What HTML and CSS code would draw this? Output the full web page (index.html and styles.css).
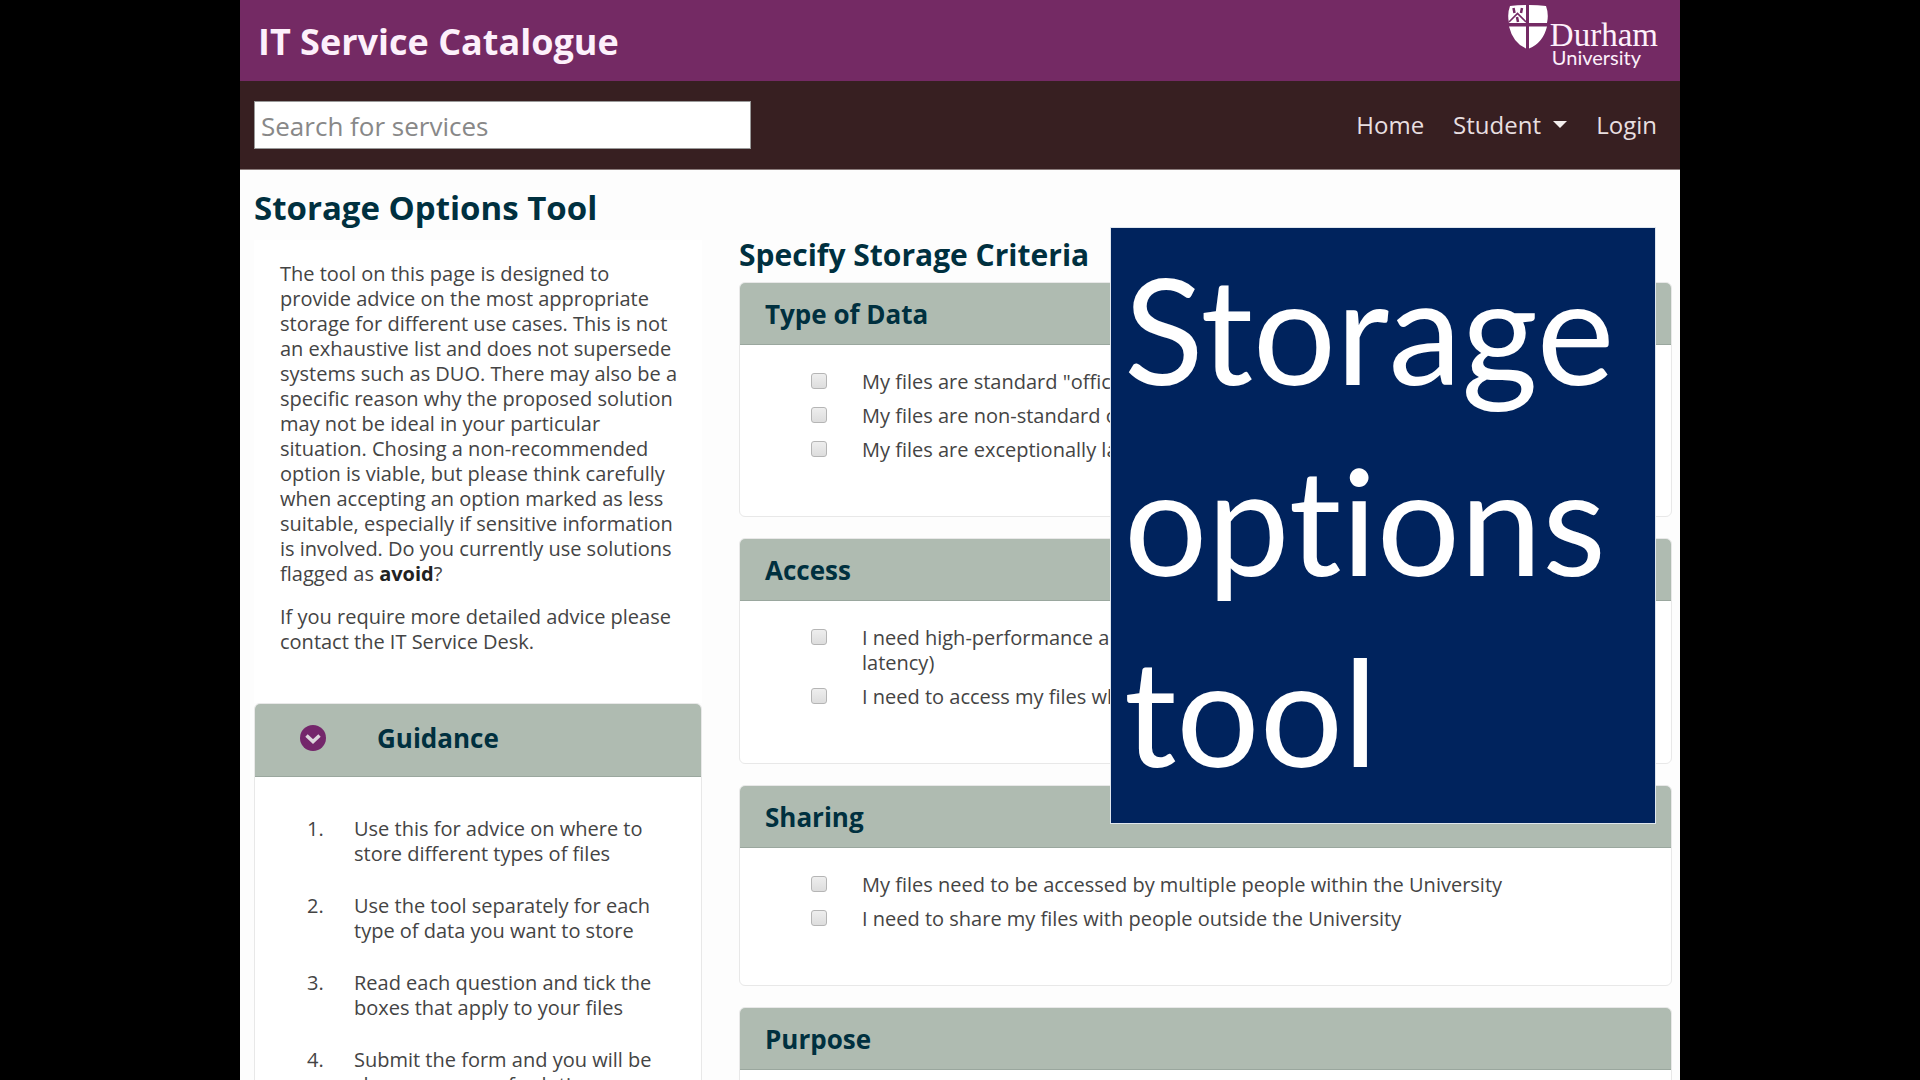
FILE: index.html
```html
<!DOCTYPE html>
<html lang="en">
<head>
<meta charset="utf-8">
<title>Storage Options Tool - IT Service Catalogue</title>
<link rel="stylesheet" href="styles.css">
</head>
<body>
<div class="stage">
  <header class="banner">
    <h1 class="site-title">IT Service Catalogue</h1>
    <a class="logo" href="#">
      <svg class="shield" viewBox="0 0 40 44" aria-hidden="true">
        <path fill="#fff" d="M2 1Q9 0 18 0V18H1Q-1 9 2 1ZM21 0Q30 0 38 1Q41 9 39 18H21ZM1 21.500H18V43.500Q5 38 1 21.500ZM21 21.500H39Q35 38 21 43.500Z"/>
        <path fill="none" stroke="#742a64" stroke-width="1.600" d="M1 17L9.500 8.500L18 17"/>
        <path fill="none" stroke="#742a64" stroke-width="2.500" d="M5.500 3L6.500 8M14 3L13 8M9 12L10 17"/>
      </svg>
      <span class="logo-text"><span class="logo-name">Durham</span><span class="logo-kind">University</span></span>
    </a>
  </header>
  <nav class="navbar">
    <input class="search" type="search" placeholder="Search for services" aria-label="Search for services">
    <div class="nav-links">
      <a href="#">Home</a>
      <a href="#">Student <span class="caret"></span></a>
      <a href="#">Login</a>
    </div>
  </nav>
  <main class="content">
    <h2 class="page-title">Storage Options Tool</h2>
    <div class="columns">
      <aside class="side">
        <section class="intro">
          <p>The tool on this page is designed to provide advice on the most appropriate storage for different use cases. This is not an exhaustive list and does not supersede systems such as DUO. There may also be a specific reason why the proposed solution may not be ideal in your particular situation. Chosing a non-recommended option is viable, but please think carefully when accepting an option marked as less suitable, especially if sensitive information is involved. Do you currently use solutions flagged as <strong>avoid</strong>?</p>
          <p>If you require more detailed advice please contact the IT Service Desk.</p>
        </section>
        <section class="card">
          <button class="card-head toggle" type="button" aria-expanded="true">
            <svg class="chevron" viewBox="0 0 26 26" aria-hidden="true"><circle cx="13" cy="13" r="13" fill="#74266b"/><path d="M6.500 10.500L13 16.500L19.500 10.500" fill="none" stroke="#dcd5dc" stroke-width="3.500"/></svg>
            Guidance
          </button>
          <ol class="steps">
            <li>Use this for advice on where to store different types of files</li>
            <li>Use the tool separately for each type of data you want to store</li>
            <li>Read each question and tick the boxes that apply to your files</li>
            <li>Submit the form and you will be shown a range of solutions</li>
          </ol>
        </section>
      </aside>
      <form class="criteria">
        <h2 class="criteria-title">Specify Storage Criteria</h2>
        <section class="card">
          <h3 class="card-head">Type of Data</h3>
          <div class="options">
            <label><input type="checkbox"><span>My files are standard "office" documents</span></label>
            <label><input type="checkbox"><span>My files are non-standard or specialist</span></label>
            <label><input type="checkbox"><span>My files are exceptionally large</span></label>
          </div>
        </section>
        <section class="card">
          <h3 class="card-head">Access</h3>
          <div class="options">
            <label><input type="checkbox"><span>I need high-performance access to my files (for example high bandwidth or low latency)</span></label>
            <label><input type="checkbox"><span>I need to access my files when off campus</span></label>
          </div>
        </section>
        <section class="card">
          <h3 class="card-head">Sharing</h3>
          <div class="options">
            <label><input type="checkbox"><span>My files need to be accessed by multiple people within the University</span></label>
            <label><input type="checkbox"><span>I need to share my files with people outside the University</span></label>
          </div>
        </section>
        <section class="card">
          <h3 class="card-head">Purpose</h3>
          <div class="options"></div>
        </section>
      </form>
    </div>
  </main>
  <div class="callout">Storage options tool</div>
</div>
</body>
</html>
```
FILE: styles.css
```css
* { box-sizing: border-box; }
body {
  margin: 0;
  background: #000;
  color: #444;
  font: 20px/25px "Open Sans", "Noto Sans", sans-serif;
}
h1, h2, h3, p { margin: 0; }
a { color: inherit; text-decoration: none; }

.stage {
  position: relative;
  width: 75%;
  height: 100vh;
  margin: 0 auto;
  overflow: hidden;
  background: #fdfdfd;
}

.banner {
  display: flex;
  justify-content: space-between;
  align-items: flex-start;
  height: 81px;
  padding: 5px 22px 0 18px;
  background: #742a64;
  color: #fdf0fb;
}
.site-title { padding-top: 12px; font-size: 36px; line-height: 50px; }
.logo { display: flex; gap: 2px; }
.shield { width: 40px; height: 44px; }
.logo-text { display: flex; flex-direction: column; padding-top: 18px; }
.logo-name { font: 33px/24px "Liberation Serif", serif; }
.logo-kind { padding-left: 2px; font: 20px/20px Lato, sans-serif; }

.navbar {
  display: flex;
  justify-content: space-between;
  align-items: center;
  height: 89px;
  padding: 0 23px 0 14px;
  border-bottom: 1px solid #8a7b7b;
  background: #371f21;
  color: #e8dfe0;
}
.search {
  width: 497px;
  height: 48px;
  padding: 1px 6px 0;
  border: 1px solid #999;
  font: 26px "Open Sans", "Noto Sans", sans-serif;
}
.search::placeholder { color: #888; }
.nav-links { display: flex; gap: 29px; font-size: 24px; line-height: 32px; }
.caret {
  display: inline-block;
  margin: 0 0 6px 6px;
  border: 7px solid transparent;
  border-top-color: #f4eeee;
  border-bottom: 0;
}

.content { padding: 17px 8px 0 14px; }
.page-title, .criteria-title { color: #00303f; font-size: 33px; line-height: 42px; }
.columns { display: grid; grid-template-columns: 448px 1fr; gap: 37px; }

.intro { min-height: 463px; margin-top: 11px; padding: 21px 22px 0 26px; background: #fff; }
.intro p + p { margin-top: 18px; }
.intro strong { color: #222; }

.card {
  margin-bottom: 21px;
  border: 1px solid #e8e8e8;
  border-radius: 6px;
  background: #fff;
}
.card-head {
  width: 100%;
  padding: 15px 25px 14px;
  border: 0;
  border-bottom: 1px solid #9aa79e;
  border-radius: 5px 5px 0 0;
  background: #afbbb1;
  color: #00303f;
  font: bold 26px/32px "Open Sans", "Noto Sans", sans-serif;
  text-align: left;
}
.toggle { display: flex; align-items: center; gap: 51px; padding: 18px 45px 22px; }
.chevron { width: 26px; height: 26px; }

.steps {
  display: grid;
  gap: 27px;
  margin: 0;
  padding: 39px 40px 0 52px;
  list-style: none;
  counter-reset: step;
}
.steps li { display: flex; counter-increment: step; }
.steps li::before { content: counter(step) "."; flex: 0 0 47px; }

.criteria-title { margin: 5px 0 6px; font-size: 30px; }
.options { display: grid; gap: 9px; padding: 24px 25px 54px 71px; }
.options label { display: flex; align-items: flex-start; gap: 35px; }
.options input {
  appearance: none;
  flex: none;
  width: 16px;
  height: 16px;
  margin: 4px 0 0;
  border: 1px solid #b5b5b5;
  border-radius: 3px;
  background: linear-gradient(#eee, #ddd);
}

/* Title box laid over the page */
.callout {
  position: absolute;
  top: 227px;
  right: 24px;
  width: 546px;
  height: 597px;
  padding: 5px 13px;
  border: 1px solid #dfe6ee;
  background: #00235d;
  color: #fff;
  font: 147px/191px Lato, sans-serif;
  font-variant-ligatures: none;
}
```
